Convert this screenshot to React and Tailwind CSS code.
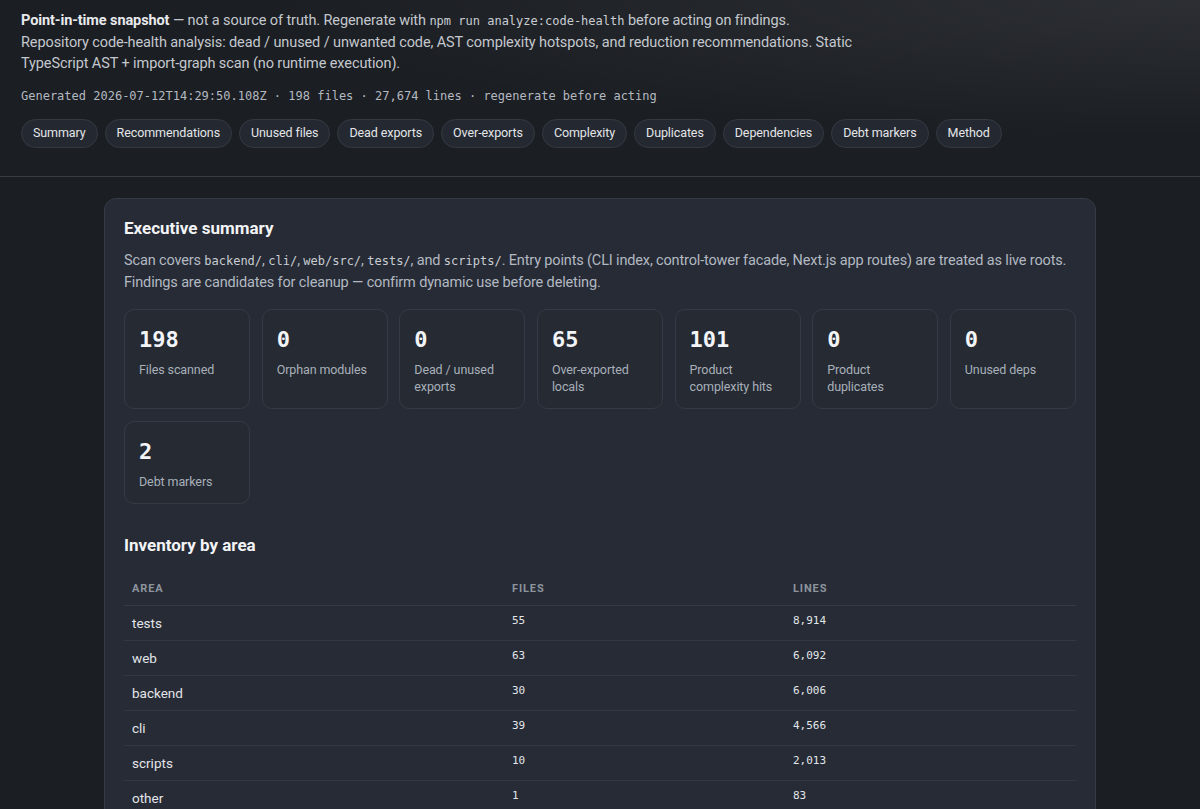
import React from "react";

const sans = "font-['Roboto','Liberation_Sans',sans-serif]";
const mono = "font-['DejaVu_Sans_Mono','Liberation_Mono',monospace]";

const pills = [
  "Summary",
  "Recommendations",
  "Unused files",
  "Dead exports",
  "Over-exports",
  "Complexity",
  "Duplicates",
  "Dependencies",
  "Debt markers",
  "Method",
];

const stats = [
  ["198", "Files scanned"],
  ["0", "Orphan modules"],
  ["0", "Dead / unused exports"],
  ["65", "Over-exported locals"],
  ["101", "Product complexity hits"],
  ["0", "Product duplicates"],
  ["0", "Unused deps"],
  ["2", "Debt markers"],
];

const rows = [
  ["tests", "55", "8,914"],
  ["web", "63", "6,092"],
  ["backend", "30", "6,006"],
  ["cli", "39", "4,566"],
  ["scripts", "10", "2,013"],
  ["other", "1", "83"],
];

function Code({ children }) {
  return <code className={`${mono} text-[12px] tracking-normal text-[#c9cdd3]`}>{children}</code>;
}

export default function App() {
  return (
    <div className={`${sans} min-h-[809px] bg-[#1b1e23] text-[#e6e8eb]`}>
      <header className="border-b border-[#383b41] bg-[radial-gradient(ellipse_at_top_right,rgba(255,255,255,0.075),transparent_55%)] px-[21px] pt-[10px] pb-[28px]">
        <div className="max-w-[860px] text-[14.5px] leading-[21px] tracking-[-0.1px] text-[#c4c8ce]">
          <p>
            <strong className="font-bold text-[#e8eaed]">Point-in-time snapshot</strong> — not a source of truth.
            Regenerate with <Code>npm run analyze:code-health</Code> before acting on findings.
          </p>
          <p>
            Repository code-health analysis: dead / unused / unwanted code, AST complexity hotspots, and reduction
            recommendations. Static TypeScript AST + import-graph scan (no runtime execution).
          </p>
        </div>
        <p className={`${mono} mt-[13px] text-[12px] leading-[18px] text-[#b4b9c0]`}>
          Generated 2026-07-12T14:29:50.108Z · 198 files · 27,674 lines · regenerate before acting
        </p>
        <nav className="mt-[14px] flex flex-wrap gap-[7px]">
          {pills.map((p) => (
            <span
              key={p}
              className="flex h-[29px] items-center rounded-full border border-[#353a42] bg-[#242830] px-[11px] text-[12.5px] tracking-[-0.1px] text-[#e3e5e8]"
            >
              {p}
            </span>
          ))}
        </nav>
      </header>

      <main className="px-[20px] pt-[21px]">
        <section className="mx-auto max-w-[992px] rounded-xl border border-[#353b46] bg-[#262b35] px-[19px] pt-[17px] pb-[10px]">
          <h2 className="text-[17px] font-bold leading-[24px] text-[#f3f4f6]">Executive summary</h2>
          <p className="mt-[10px] text-[14.5px] leading-[21px] tracking-[-0.15px] text-[#b3b9c2]">
            Scan covers <Code>backend/</Code>, <Code>cli/</Code>, <Code>web/src/</Code>, <Code>tests/</Code>, and{" "}
            <Code>scripts/</Code>. Entry points (CLI index, control-tower facade, Next.js app routes) are treated as
            live roots. Findings are candidates for cleanup — confirm dynamic use before deleting.
          </p>

          <div className="mt-[16px] grid grid-cols-7 gap-x-[11.5px] gap-y-[12px]">
            {stats.map(([n, l], i) => (
              <div
                key={i}
                className="rounded-[10px] border border-[#353b46] bg-[#252a33] px-[14px] pt-[16px] pb-[13px]"
              >
                <div className={`${mono} text-[22px] font-bold leading-[28px] text-[#f2f4f7]`}>{n}</div>
                <div className="mt-[7px] text-[12.5px] leading-[17px] tracking-[-0.1px] text-[#a9b0b9]">{l}</div>
              </div>
            ))}
          </div>

          <h2 className="mt-[29px] text-[17px] font-bold leading-[24px] text-[#f3f4f6]">Inventory by area</h2>

          <table className="mt-[16px] w-full table-fixed border-collapse">
            <colgroup>
              <col className="w-[380px]" />
              <col className="w-[281px]" />
              <col />
            </colgroup>
            <thead>
              <tr className="border-b border-[#353b46]">
                {["Area", "Files", "Lines"].map((h) => (
                  <th
                    key={h}
                    className="px-[8px] py-[8px] text-left text-[11px] font-bold uppercase leading-[16px] tracking-[0.08em] text-[#8d949e]"
                  >
                    {h}
                  </th>
                ))}
              </tr>
            </thead>
            <tbody>
              {rows.map(([a, f, l]) => (
                <tr key={a} className="border-b border-[#323843]">
                  <td className="px-[8px] py-[7px] text-[13.5px] leading-[20px] text-[#e2e5e9]">{a}</td>
                  <td className={`${mono} px-[8px] pt-[5px] pb-[9px] text-[11px] leading-[20px] text-[#e2e5e9]`}>{f}</td>
                  <td className={`${mono} px-[8px] pt-[5px] pb-[9px] text-[11px] leading-[20px] text-[#e2e5e9]`}>{l}</td>
                </tr>
              ))}
            </tbody>
          </table>
        </section>
      </main>
    </div>
  );
}
